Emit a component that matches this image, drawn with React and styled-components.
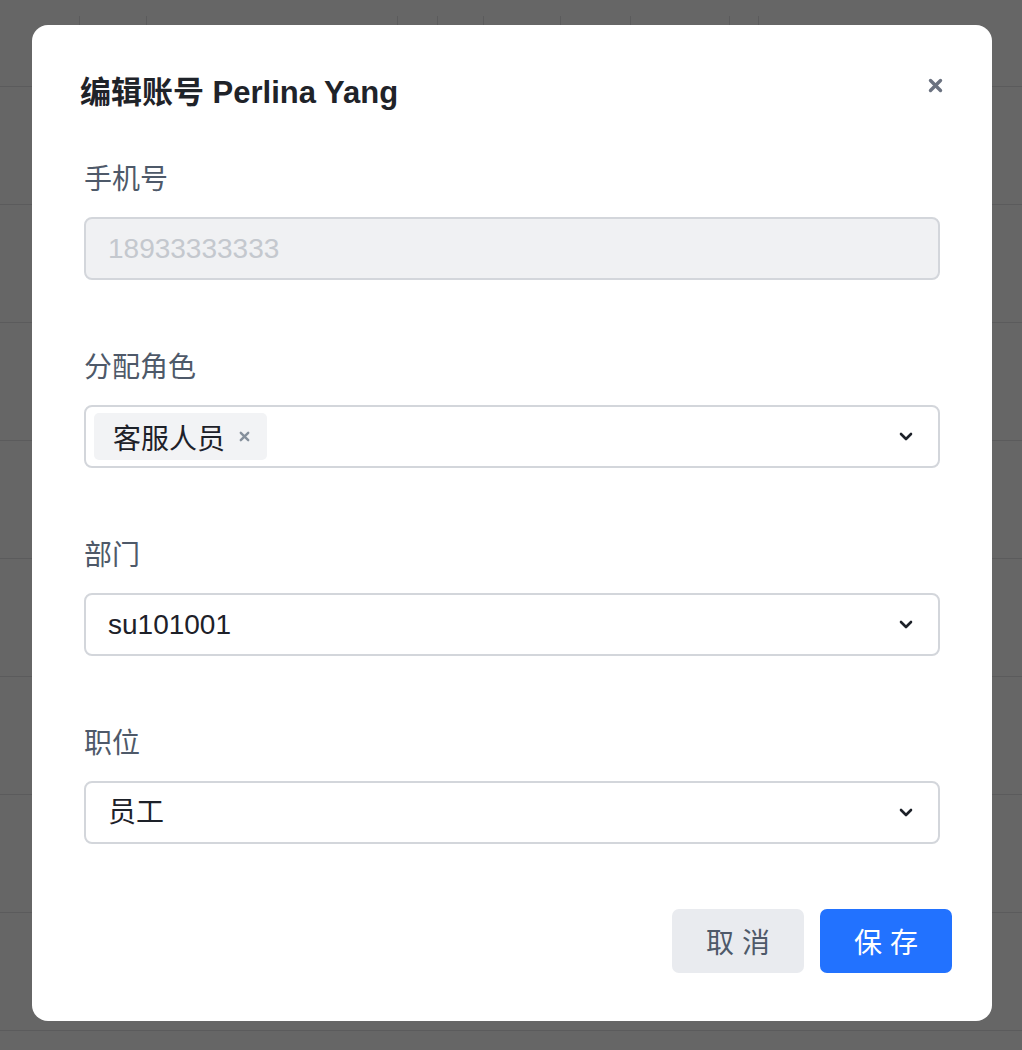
import React from "react";
import styled, { createGlobalStyle } from "styled-components";

const GlobalStyle = createGlobalStyle`
  * {
    box-sizing: border-box;
  }
  body {
    margin: 0;
    background: #ffffff;
    font-family: "Liberation Sans", "Noto Sans CJK SC", sans-serif;
  }
`;

// the table that sits behind the dialog
const Table = styled.div`
  width: 1022px;
  height: 1050px;
  overflow: hidden;
`;

const HeaderRow = styled.div`
  height: 87px;
  display: flex;
  align-items: center;
  border-bottom: 1px solid #e3e4e6;
`;

const HeaderCell = styled.div`
  width: ${(p) => p.width}px;
  height: 54px;
  flex-shrink: 0;
  border-right: 1px solid #e3e4e6;
`;

const BodyRow = styled.div`
  height: 118px;
  border-bottom: 1px solid #e3e4e6;
`;

const Overlay = styled.div`
  position: fixed;
  inset: 0;
  background: rgba(0, 0, 0, 0.6);
  display: flex;
  align-items: flex-start;
  padding: 25px 0 0 32px;
`;

const Modal = styled.div`
  width: 960px;
  background: #ffffff;
  border-radius: 16px;
  padding: 48px;
  display: flex;
  flex-direction: column;
`;

const TitleBar = styled.div`
  display: flex;
  align-items: center;
  justify-content: space-between;
  height: 40px;
  margin-bottom: 49px;
`;

const Title = styled.h2`
  margin: 0;
  font-size: 31px;
  line-height: 40px;
  font-weight: 700;
  color: #1f2329;
`;

const CloseButton = styled.button`
  border: none;
  background: none;
  padding: 0;
  width: 15px;
  height: 15px;
  margin-right: 1px;
  margin-top: -16px;
  display: flex;
  cursor: pointer;
`;

const Form = styled.div`
  display: flex;
  flex-direction: column;
  gap: 70px;
  padding: 0 4px;
`;

const Field = styled.div`
  display: flex;
  flex-direction: column;
`;

const Label = styled.label`
  font-size: 28px;
  line-height: 36px;
  color: #4e5969;
  margin-bottom: 19px;
`;

const Control = styled.div`
  height: 63px;
  border: 2px solid #d3d6db;
  border-radius: 8px;
  display: flex;
  align-items: center;
  padding: ${(p) => (p.tags ? "0 25px 0 8px" : "0 25px 0 22px")};
  background: ${(p) => (p.disabled ? "#f0f1f3" : "#ffffff")};
  font-size: 28px;
  color: ${(p) => (p.disabled ? "#c4c8ce" : "#1d2129")};
`;

const Value = styled.span`
  flex: 1;
  line-height: 36px;
`;

const Tags = styled.div`
  flex: 1;
  display: flex;
  gap: 8px;
`;

const Tag = styled.span`
  display: inline-flex;
  align-items: center;
  gap: 14px;
  height: 47px;
  padding: 0 17px 0 19px;
  border-radius: 5px;
  background: #f2f3f5;
  font-size: 28px;
  color: #1d2129;
`;

const Footer = styled.div`
  display: flex;
  justify-content: flex-end;
  gap: 16px;
  margin-top: 65px;
  margin-right: -8px;
`;

const Button = styled.button`
  width: 132px;
  height: 64px;
  border: none;
  border-radius: 7px;
  font-family: inherit;
  font-size: 28px;
  letter-spacing: 8px;
  padding: 0 0 0 8px;
  background: ${(p) => (p.primary ? "#2272ff" : "#e9ebef")};
  color: ${(p) => (p.primary ? "#ffffff" : "#4e5969")};
  cursor: pointer;
`;

const Close = () => (
  <svg width="15" height="15" viewBox="0 0 15 15">
    <path
      d="M2.5 2.5 L12.5 12.5 M12.5 2.5 L2.5 12.5"
      stroke="#6b7280"
      strokeWidth="3.4"
      strokeLinecap="round"
    />
  </svg>
);

const SmallX = () => (
  <svg width="11" height="11" viewBox="0 0 11 11">
    <path
      d="M1.8 1.8 L9.2 9.2 M9.2 1.8 L1.8 9.2"
      stroke="#86909c"
      strokeWidth="2.4"
      strokeLinecap="round"
    />
  </svg>
);

const Chevron = () => (
  <svg width="14" height="9" viewBox="0 0 14 9">
    <path
      d="M2 2 L7 7 L12 2"
      fill="none"
      stroke="#1d2129"
      strokeWidth="2.6"
      strokeLinecap="round"
      strokeLinejoin="round"
    />
  </svg>
);

const columns = [80, 67, 251, 40, 46, 77, 70, 99, 29];

export default function App() {
  return (
    <>
      <GlobalStyle />
      <Table>
        <HeaderRow>
          {columns.map((w, i) => (
            <HeaderCell key={i} width={w} />
          ))}
        </HeaderRow>
        {Array.from({ length: 8 }).map((_, i) => (
          <BodyRow key={i} />
        ))}
      </Table>

      <Overlay>
        <Modal>
          <TitleBar>
            <Title>编辑账号 Perlina Yang</Title>
            <CloseButton aria-label="关闭">
              <Close />
            </CloseButton>
          </TitleBar>

          <Form>
            <Field>
              <Label>手机号</Label>
              <Control disabled>
                <Value>18933333333</Value>
              </Control>
            </Field>

            <Field>
              <Label>分配角色</Label>
              <Control tags>
                <Tags>
                  <Tag>
                    客服人员
                    <SmallX />
                  </Tag>
                </Tags>
                <Chevron />
              </Control>
            </Field>

            <Field>
              <Label>部门</Label>
              <Control>
                <Value>su101001</Value>
                <Chevron />
              </Control>
            </Field>

            <Field>
              <Label>职位</Label>
              <Control>
                <Value>员工</Value>
                <Chevron />
              </Control>
            </Field>
          </Form>

          <Footer>
            <Button>取消</Button>
            <Button primary>保存</Button>
          </Footer>
        </Modal>
      </Overlay>
    </>
  );
}
